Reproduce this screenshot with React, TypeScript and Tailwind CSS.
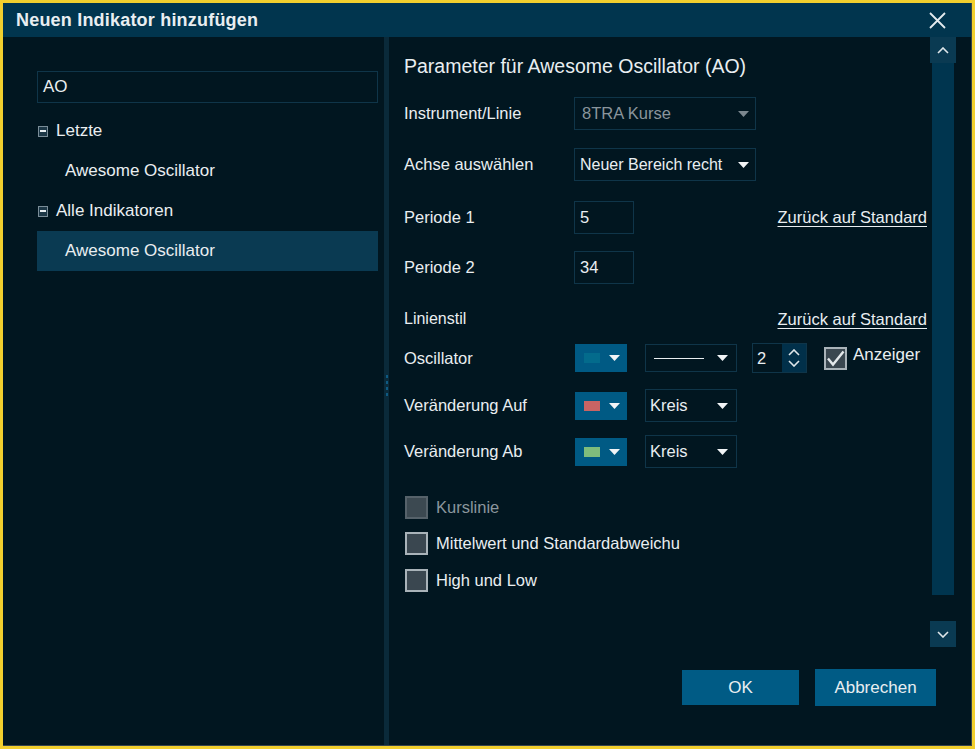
import type { ReactNode } from "react";

const font = "font-['Liberation_Sans',Arial,sans-serif]";

function Caret({ muted }: { muted?: boolean }) {
  return (
    <svg width="11" height="6" viewBox="0 0 11 6" className="shrink-0">
      <path d="M0 0h11L5.5 6z" fill={muted ? "#7b878f" : "#f1f4f6"} />
    </svg>
  );
}

function Chevron({ down }: { down?: boolean }) {
  return (
    <svg width="12" height="7" viewBox="0 0 12 7">
      <path
        d={down ? "M1 1l5 5 5-5" : "M1 6l5-5 5 5"}
        fill="none"
        stroke="#dfe6ea"
        strokeWidth="1.6"
      />
    </svg>
  );
}

function TreeToggle() {
  return (
    <span className="flex h-[11px] w-[10px] shrink-0 items-center justify-center border border-[#7a8d98] bg-[#1c3746]">
      <span className="h-[2px] w-[6px] bg-[#e6ecef]" />
    </span>
  );
}

function ColorButton({ swatch }: { swatch: string }) {
  return (
    <div className="flex h-[28px] w-[52px] items-center bg-[#005a84] pl-[9px]">
      <span className={`h-[10px] w-[16px] ${swatch}`} />
      <span className="ml-[9px]">
        <Caret />
      </span>
    </div>
  );
}

function Checkbox({ checked, disabled }: { checked?: boolean; disabled?: boolean }) {
  return (
    <span
      className={`flex h-[23px] w-[23px] shrink-0 items-center justify-center border-2 ${
        disabled ? "border-[#56626a] bg-[#3c4951]" : "border-[#a9b3b9] bg-[#3a4750]"
      }`}
    >
      {checked && (
        <svg width="19" height="19" viewBox="0 0 19 19">
          <path d="M2 9.5l5 6L17.5 2.5" fill="none" stroke="#e3e8eb" strokeWidth="2.4" />
        </svg>
      )}
    </span>
  );
}

function Row({ label, top, h, children }: { label: string; top: string; h: string; children: ReactNode }) {
  return (
    <div className={`flex items-center ${top} ${h}`}>
      <span className="w-[170px] shrink-0">{label}</span>
      {children}
    </div>
  );
}

function Link() {
  return <span className="ml-auto mr-[3px] underline underline-offset-[3px]">Zurück auf Standard</span>;
}

export default function App() {
  return (
    <div className={`${font} h-[749px] w-[975px] border-[3px] border-[#f2cf2e] text-[#e9eef1]`}>
      <div className="flex h-full flex-col border-b border-r border-[#37444d] bg-[#011620]">
        {/* title bar */}
        <div className="flex h-[34px] shrink-0 items-center bg-[#01354e] pl-[13px] pr-[25px]">
          <span className="text-[18px] font-bold tracking-[0.2px]">Neuen Indikator hinzufügen</span>
          <svg width="17" height="17" viewBox="0 0 17 17" className="ml-auto">
            <path d="M1 1l15 15M16 1L1 16" stroke="#e4eaee" strokeWidth="1.8" />
          </svg>
        </div>

        <div className="flex flex-1">
          {/* indicator tree */}
          <div className="flex w-[381px] shrink-0 flex-col pl-[34px] pr-[6px] pt-[34px] text-[17px]">
            <div className="flex h-[32px] items-center border border-[#0f3549] px-[5px]">AO</div>
            <div className="mt-[8px] flex h-[40px] items-center pl-[1px]">
              <TreeToggle />
              <span className="ml-[8px]">Letzte</span>
            </div>
            <div className="flex h-[40px] items-center pl-[28px]">Awesome Oscillator</div>
            <div className="flex h-[40px] items-center pl-[1px]">
              <TreeToggle />
              <span className="ml-[8px]">Alle Indikatoren</span>
            </div>
            <div className="flex h-[40px] items-center bg-[#0a3a52] pl-[28px]">Awesome Oscillator</div>
          </div>

          {/* splitter */}
          <div className="flex w-[5px] shrink-0 flex-col items-center justify-center gap-[3px] bg-[#0a2a3a]">
            <span className="-mt-[12px] h-[3px] w-[2px] bg-[#0e5a82]" />
            <span className="h-[3px] w-[2px] bg-[#0e5a82]" />
            <span className="h-[3px] w-[2px] bg-[#0e5a82]" />
            <span className="h-[3px] w-[2px] bg-[#0e5a82]" />
          </div>

          {/* parameters */}
          <div className="flex flex-1 flex-col">
            <div className="flex h-[611px]">
              <div className="flex flex-1 flex-col pl-[15px] text-[16.5px]">
                <div className="mt-[18px] flex h-[24px] items-center text-[19.5px]">
                  Parameter für Awesome Oscillator (AO)
                </div>

                <Row label="Instrument/Linie" top="mt-[18px]" h="h-[33px]">
                  <div className="flex h-[33px] w-[182px] items-center border border-[#0f3549] pl-[7px] pr-[6px] text-[#8a959c]">
                    <span className="flex-1">8TRA Kurse</span>
                    <Caret muted />
                  </div>
                </Row>

                <Row label="Achse auswählen" top="mt-[18px]" h="h-[33px]">
                  <div className="flex h-[33px] w-[182px] items-center border border-[#0f3549] pl-[5px] pr-[6px]">
                    <span className="flex-1 whitespace-nowrap text-[16px]">Neuer Bereich recht</span>
                    <Caret />
                  </div>
                </Row>

                <Row label="Periode 1" top="mt-[20px]" h="h-[33px]">
                  <div className="flex h-[33px] w-[60px] items-center border border-[#0f3549] pl-[5px]">5</div>
                  <Link />
                </Row>

                <Row label="Periode 2" top="mt-[17px]" h="h-[33px]">
                  <div className="flex h-[33px] w-[60px] items-center border border-[#0f3549] pl-[5px]">34</div>
                </Row>

                <div className="mt-[25px] flex h-[20px] items-center">
                  <span className="text-[16px]">Linienstil</span>
                  <Link />
                </div>

                <Row label="Oscillator" top="mt-[14px]" h="h-[30px]">
                  <span className="ml-px">
                    <ColorButton swatch="bg-[#036b8c]" />
                  </span>
                  <div className="ml-[18px] flex h-[28px] w-[92px] items-center border border-[#0f3549] pl-[8px] pr-[8px]">
                    <span className="h-px w-[50px] bg-[#e9eef1]" />
                    <span className="ml-auto">
                      <Caret />
                    </span>
                  </div>
                  <div className="ml-[15px] flex h-[30px] w-[55px] border border-[#0f3549]">
                    <span className="flex w-[29px] items-center pl-[4px]">2</span>
                    <span className="flex flex-1 flex-col items-center justify-center gap-[4px] bg-[#01304a]">
                      <Chevron />
                      <Chevron down />
                    </span>
                  </div>
                  <span className="ml-[17px]">
                    <Checkbox checked />
                  </span>
                  <span className="ml-[6px] -mt-[6px] text-[17px]">Anzeiger</span>
                </Row>

                <Row label="Veränderung Auf" top="mt-[16px]" h="h-[33px]">
                  <span className="ml-px">
                    <ColorButton swatch="bg-[#c96464]" />
                  </span>
                  <div className="ml-[18px] flex h-[33px] w-[92px] items-center border border-[#0f3549] pl-[4px] pr-[8px]">
                    <span className="flex-1">Kreis</span>
                    <Caret />
                  </div>
                </Row>

                <Row label="Veränderung Ab" top="mt-[13px]" h="h-[33px]">
                  <span className="ml-px">
                    <ColorButton swatch="bg-[#7fbd7c]" />
                  </span>
                  <div className="ml-[18px] flex h-[33px] w-[92px] items-center border border-[#0f3549] pl-[4px] pr-[8px]">
                    <span className="flex-1">Kreis</span>
                    <Caret />
                  </div>
                </Row>

                <div className="mt-[28px] flex h-[23px] items-center pl-px">
                  <Checkbox disabled />
                  <span className="ml-[8px] text-[#8b969d]">Kurslinie</span>
                </div>
                <div className="mt-[13px] flex h-[23px] items-center pl-px">
                  <Checkbox />
                  <span className="ml-[8px]">Mittelwert und Standardabweichu</span>
                </div>
                <div className="mt-[14px] flex h-[23px] items-center pl-px">
                  <Checkbox />
                  <span className="ml-[8px]">High und Low</span>
                </div>
              </div>

              {/* scrollbar */}
              <div className="mr-[15px] flex w-[26px] flex-col">
                <div className="flex h-[26px] items-center justify-center bg-[#0a3a52]">
                  <Chevron />
                </div>
                <div className="mx-[2px] h-[532px] bg-[#00354f]" />
                <div className="mt-[26px] flex h-[26px] items-center justify-center bg-[#0a3a52]">
                  <Chevron down />
                </div>
              </div>
            </div>

            <div className="flex items-start justify-end gap-[16px] pr-[35px] pt-[22px] text-[17px]">
              <button className="flex h-[35px] w-[117px] items-center justify-center bg-[#005b85]">OK</button>
              <button className="-mt-px flex h-[37px] w-[121px] items-center justify-center bg-[#005b85]">
                Abbrechen
              </button>
            </div>
          </div>
        </div>
      </div>
    </div>
  );
}
